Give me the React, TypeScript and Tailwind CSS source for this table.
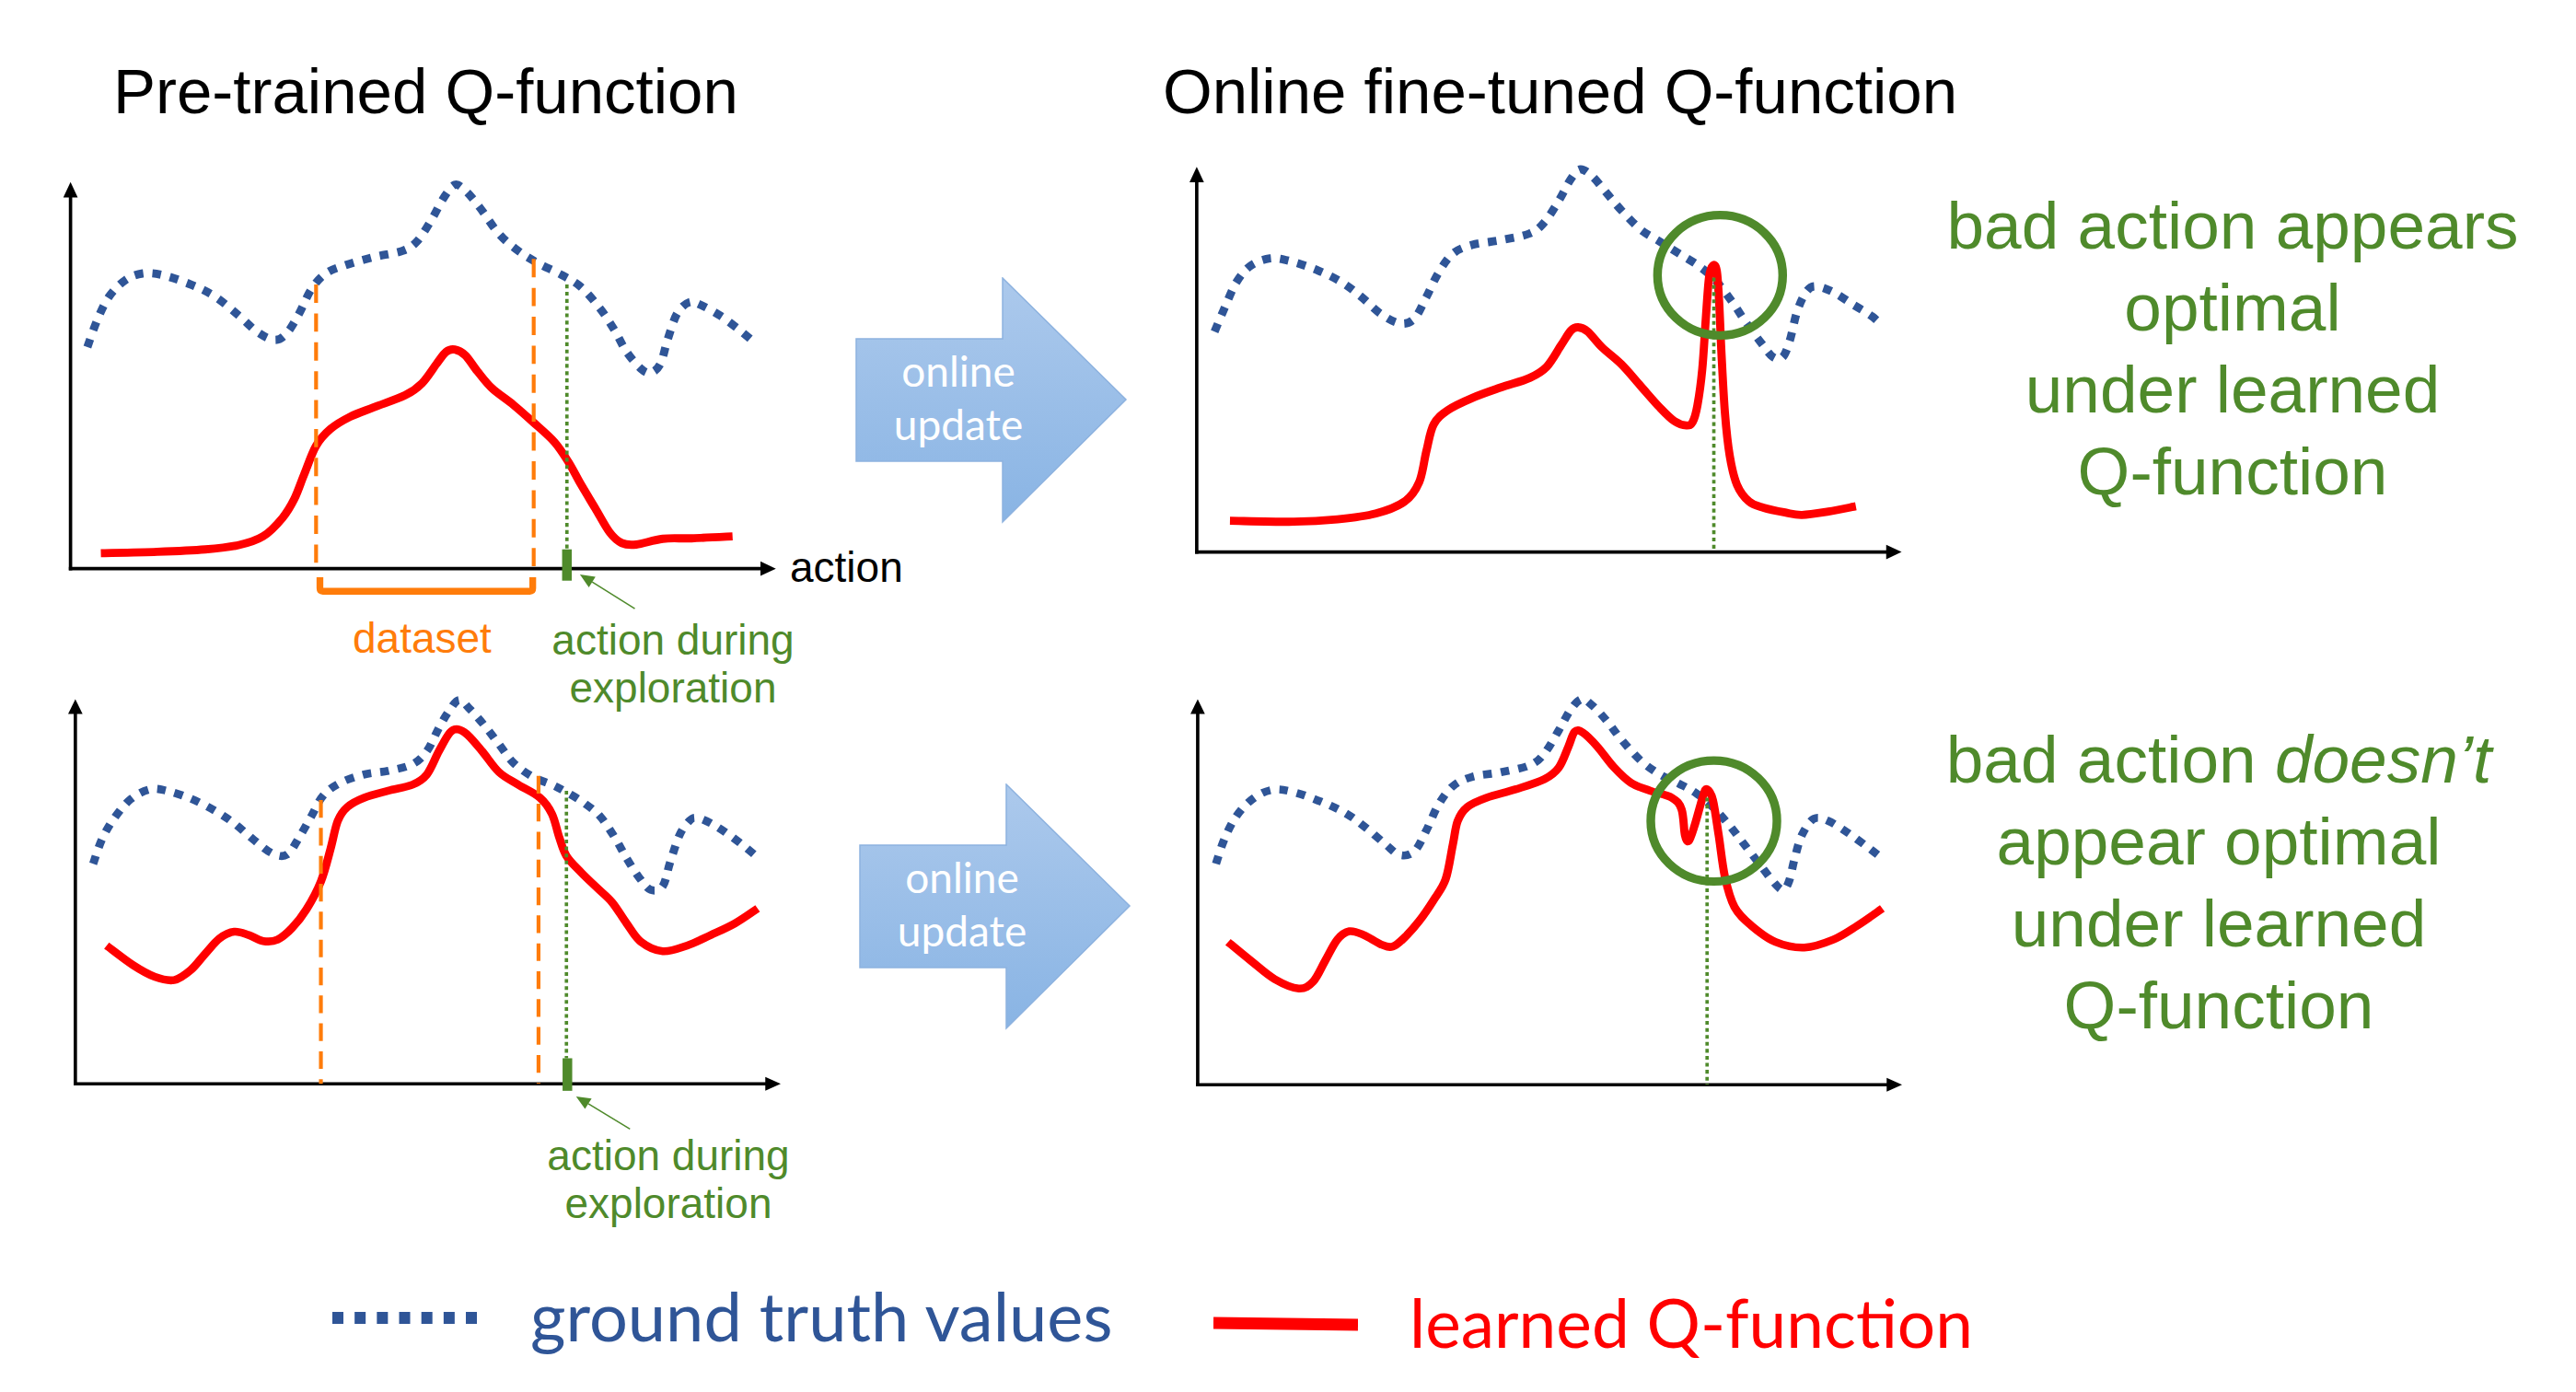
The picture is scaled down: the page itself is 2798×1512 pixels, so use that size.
import React from "react";

type P = [number, number];

function smooth(pts: P[]): string {
  let d = `M${pts[0][0]},${pts[0][1]}`;
  for (let i = 0; i < pts.length - 1; i++) {
    const p0 = pts[i - 1] || pts[i];
    const p1 = pts[i];
    const p2 = pts[i + 1];
    const p3 = pts[i + 2] || p2;
    const c1x = p1[0] + (p2[0] - p0[0]) / 6;
    const c1y = p1[1] + (p2[1] - p0[1]) / 6;
    const c2x = p2[0] - (p3[0] - p1[0]) / 6;
    const c2y = p2[1] - (p3[1] - p1[1]) / 6;
    d += ` C${c1x.toFixed(1)},${c1y.toFixed(1)} ${c2x.toFixed(1)},${c2y.toFixed(1)} ${p2[0]},${p2[1]}`;
  }
  return d;
}

const BLUE = "#2f5597";
const RED = "#ff0000";
const GREEN = "#4f8a2b";
const ORANGE = "#ff7c0a";

type ChartProps = {
  w: number;
  h: number;
  vbH: number;
  axisX: number;
  axisY: number;
  yTip: number;
  xTip: number;
  blue: P[];
  red: P[];
  oranges?: { x: number; y1: number }[];
  green: { x: number; y1: number; y2: number };
  bar?: { x: number; y1: number; y2: number };
  pointer?: { tail: P; tip: P };
  circle?: { cx: number; cy: number; rx: number; ry: number };
  bracket?: boolean;
  className?: string;
};

function Chart(p: ChartProps) {
  let head: string | null = null;
  let base: P | null = null;
  if (p.pointer) {
    const [tx, ty] = p.pointer.tail;
    const [hx, hy] = p.pointer.tip;
    const len = Math.hypot(hx - tx, hy - ty);
    const ux = (hx - tx) / len;
    const uy = (hy - ty) / len;
    const bx = hx - 30 * ux;
    const by = hy - 30 * uy;
    const px = -uy * 13;
    const py = ux * 13;
    base = [bx, by];
    head = `${hx},${hy} ${bx + px},${by + py} ${bx - px},${by - py}`;
  }
  return (
    <svg
      width={p.w}
      height={p.h}
      viewBox={`0 0 1568 ${p.vbH}`}
      preserveAspectRatio="none"
      className={`block overflow-visible ${p.className ?? ""}`}
    >
      {/* axes */}
      <line x1={p.axisX} y1={p.axisY + 3.5} x2={p.axisX} y2={p.yTip + 26} stroke="#000" strokeWidth={7} />
      <polygon points={`${p.axisX},${p.yTip} ${p.axisX - 15},${p.yTip + 32} ${p.axisX + 15},${p.yTip + 32}`} fill="#000" />
      <line x1={p.axisX - 3.5} y1={p.axisY} x2={p.xTip - 26} y2={p.axisY} stroke="#000" strokeWidth={7} />
      <polygon points={`${p.xTip},${p.axisY} ${p.xTip - 32},${p.axisY - 15} ${p.xTip - 32},${p.axisY + 15}`} fill="#000" />

      {/* ground truth */}
      <path d={smooth(p.blue)} fill="none" stroke={BLUE} strokeWidth={17} strokeDasharray="18 19" />

      {/* learned */}
      <path d={smooth(p.red)} fill="none" stroke={RED} strokeWidth={17} strokeLinejoin="round" />

      {/* dataset bounds */}
      {p.oranges?.map((o, i) => (
        <line key={i} x1={o.x} y1={o.y1} x2={o.x} y2={p.axisY} stroke={ORANGE} strokeWidth={8} strokeDasharray="38 22" />
      ))}
      {p.bracket && (
        <path d="M588,893 L588,916 Q588,922 594,922 L1024,922 Q1030,922 1030,916 L1030,893" fill="none" stroke={ORANGE} strokeWidth={14} />
      )}

      {/* exploration action */}
      <line x1={p.green.x} y1={p.green.y1} x2={p.green.x} y2={p.green.y2} stroke={GREEN} strokeWidth={7} strokeDasharray="8 7" />
      {p.bar && <rect x={p.bar.x - 10} y={p.bar.y1} width={20} height={p.bar.y2 - p.bar.y1} fill={GREEN} />}
      {p.pointer && base && head && (
        <>
          <line x1={p.pointer.tail[0]} y1={p.pointer.tail[1]} x2={base[0]} y2={base[1]} stroke={GREEN} strokeWidth={3} />
          <polygon points={head} fill={GREEN} />
        </>
      )}
      {p.circle && (
        <ellipse cx={p.circle.cx} cy={p.circle.cy} rx={p.circle.rx} ry={p.circle.ry} fill="none" stroke={GREEN} strokeWidth={18} />
      )}
    </svg>
  );
}

function UpdateArrow({ id }: { id: string }) {
  return (
    <div className="relative w-[296px] h-[268px]">
      <svg width="296" height="268" viewBox="0 0 296 268" className="absolute left-0 top-0">
        <defs>
          <linearGradient id={id} x1="0" y1="0" x2="0" y2="1">
            <stop offset="0" stopColor="#acc9ec" />
            <stop offset="1" stopColor="#89b4e4" />
          </linearGradient>
        </defs>
        <polygon
          points="1,67 160,67 160,1 294,133 160,266 160,200 1,200"
          fill={`url(#${id})`}
          stroke="#8db2df"
          strokeWidth="1.5"
        />
      </svg>
      <div className="absolute left-0 top-[73px] w-[224px] text-center text-white font-[Lato,sans-serif] text-[46px] leading-[58px]">
        online
        <br />
        update
      </div>
    </div>
  );
}

const TL_BLUE: P[] = [
  [105, 415], [125, 360], [150, 310], [185, 275], [220, 262], [260, 265], [320, 285], [370, 310], [420, 350],
  [460, 385], [495, 400], [520, 385], [545, 345], [570, 295], [600, 262], [640, 245], [700, 228], [760, 215],
  [790, 195], [820, 150], [845, 105], [868, 78], [890, 90], [920, 125], [960, 180], [1000, 215], [1040, 240],
  [1090, 265], [1130, 290], [1170, 335], [1200, 380], [1225, 425], [1255, 460], [1275, 468], [1295, 450],
  [1310, 400], [1330, 345], [1355, 322], [1380, 328], [1420, 350], [1460, 380], [1490, 405],
];
const TL_RED: P[] = [
  [133, 843], [250, 840], [350, 835], [420, 826], [470, 808], [510, 770], [535, 730], [555, 680], [580, 620],
  [610, 585], [650, 560], [700, 540], [765, 515], [800, 490], [830, 450], [850, 425], [868, 420], [890, 432],
  [915, 465], [945, 500], [990, 535], [1030, 570], [1075, 612], [1105, 655], [1130, 700], [1160, 750],
  [1190, 800], [1215, 822], [1245, 825], [1300, 813], [1360, 812], [1445, 808],
];

const TR_BLUE: P[] = [
  [75, 402], [95, 355], [120, 300], [150, 265], [190, 250], [230, 255], [290, 275], [340, 300], [380, 330],
  [420, 365], [460, 385], [490, 375], [515, 330], [540, 280], [570, 240], [610, 222], [670, 212], [730, 198],
  [760, 175], [790, 130], [815, 85], [835, 65], [860, 80], [890, 115], [920, 150], [960, 190], [1000, 215],
  [1040, 240], [1080, 265], [1115, 295], [1150, 340], [1180, 385], [1210, 425], [1235, 455], [1255, 455],
  [1270, 420], [1285, 360], [1305, 318], [1325, 308], [1360, 320], [1400, 345], [1440, 370], [1462, 390],
];
const TR_RED: P[] = [
  [107, 795], [240, 797], [330, 792], [410, 780], [470, 755], [500, 715], [515, 650], [530, 595], [560, 565],
  [610, 540], [670, 518], [730, 498], [765, 475], [795, 430], [815, 400], [830, 393], [850, 402], [880, 435],
  [920, 470], [960, 515], [1000, 560], [1030, 588], [1055, 597], [1068, 590], [1078, 555], [1088, 480],
  [1095, 380], [1102, 290], [1110, 265], [1118, 275], [1123, 340], [1128, 450], [1135, 570], [1145, 660],
  [1160, 720], [1185, 755], [1215, 768], [1260, 778], [1295, 783], [1350, 776], [1407, 765],
];

const BL_BLUE: P[] = [
  [117, 432], [135, 380], [160, 335], [195, 293], [235, 272], [270, 275], [320, 292], [370, 318], [410, 345],
  [450, 380], [490, 410], [520, 412], [545, 375], [570, 330], [595, 285], [630, 258], [680, 240], [730, 232],
  [780, 218], [810, 190], [835, 140], [855, 105], [877, 80], [900, 100], [930, 135], [960, 175], [990, 215],
  [1030, 245], [1070, 262], [1100, 278], [1135, 300], [1170, 330], [1200, 375], [1225, 420], [1250, 460],
  [1275, 488], [1300, 480], [1315, 430], [1335, 370], [1355, 340], [1370, 333], [1400, 345], [1445, 375],
  [1500, 420],
];
const BL_RED: P[] = [
  [145, 608], [200, 650], [245, 675], [285, 682], [320, 660], [350, 625], [380, 592], [410, 578], [440, 585],
  [470, 598], [500, 595], [530, 570], [560, 530], [590, 470], [610, 400], [625, 340], [645, 310], [680, 290],
  [730, 275], [780, 262], [810, 240], [835, 190], [858, 150], [875, 143], [895, 155], [925, 190], [960, 235],
  [1000, 262], [1045, 290], [1070, 325], [1085, 375], [1100, 415], [1130, 450], [1165, 485], [1195, 515],
  [1225, 560], [1255, 600], [1300, 620], [1350, 608], [1400, 585], [1450, 560], [1497, 528],
];

const BR_BLUE: P[] = [
  [78, 432], [95, 380], [120, 330], [155, 292], [195, 273], [240, 278], [300, 300], [350, 325], [390, 355],
  [430, 390], [460, 413], [490, 405], [515, 360], [540, 305], [570, 265], [610, 245], [670, 235], [730, 220],
  [760, 195], [790, 145], [815, 100], [838, 78], [860, 92], [890, 125], [920, 165], [960, 210], [1000, 240],
  [1040, 260], [1075, 280], [1110, 310], [1145, 350], [1175, 390], [1205, 430], [1235, 470], [1255, 488],
  [1268, 470], [1280, 420], [1295, 370], [1320, 335], [1350, 340], [1390, 365], [1430, 395], [1462, 420],
];
const BR_RED: P[] = [
  [103, 600], [150, 640], [200, 680], [250, 700], [280, 685], [305, 640], [330, 595], [355, 577], [385, 585],
  [420, 605], [445, 610], [470, 590], [500, 555], [530, 510], [555, 465], [570, 390], [580, 340], [600, 310],
  [640, 290], [700, 272], [760, 250], [790, 225], [810, 180], [823, 148], [840, 150], [870, 180], [905, 225],
  [940, 258], [980, 275], [1025, 290], [1045, 315], [1052, 370], [1060, 383], [1072, 350], [1090, 285],
  [1098, 272], [1110, 295], [1122, 370], [1135, 460], [1155, 525], [1190, 565], [1240, 600], [1300, 612],
  [1360, 595], [1410, 565], [1462, 528],
];

export default function App() {
  return (
    <div className="w-[2798px] h-[1512px] bg-white overflow-hidden text-black font-['Liberation_Sans',Arial,sans-serif]">
      {/* titles */}
      <div className="flex h-[150px] pt-[65px] pl-[123px] text-[69px] leading-none whitespace-nowrap">
        <div className="w-[1140px]">Pre-trained Q-function</div>
        <div>Online fine-tuned Q-function</div>
      </div>

      {/* row 1 */}
      <div className="flex h-[570px]">
        <div className="w-[860px] pl-[40px]">
          <div className="relative w-[820px]">
            <Chart
              className="mt-[10px]"
              w={820}
              h={500}
              vbH={956}
              axisX={70}
              axisY={875}
              yTip={72}
              xTip={1535}
              blue={TL_BLUE}
              red={TL_RED}
              oranges={[{ x: 580, y1: 285 }, { x: 1032, y1: 232 }]}
              green={{ x: 1101, y1: 285, y2: 835 }}
              bar={{ x: 1101, y1: 835, y2: 900 }}
              pointer={{ tail: [1242, 958], tip: [1128, 887] }}
              bracket
            />
            <span className="absolute left-[818px] top-[433px] text-[46px] leading-none whitespace-nowrap">action</span>
            <span className="absolute left-[343px] top-[510px] text-[46px] leading-none text-[#ff7c0a] whitespace-nowrap">dataset</span>
            <div className="absolute left-[541px] top-[509px] w-[300px] text-center text-[46px] leading-[52px] text-[#4f8a2b] whitespace-nowrap">
              action during
              <br />
              exploration
            </div>
          </div>
        </div>
        <div className="w-[420px] pl-[69px] pt-[151px]">
          <UpdateArrow id="arrowGradTop" />
        </div>
        <div className="w-[820px]">
          <Chart
            w={820}
            h={470}
            vbH={899}
            axisX={38}
            axisY={860}
            yTip={60}
            xTip={1502}
            blue={TR_BLUE}
            red={TR_RED}
            green={{ x: 1112, y1: 290, y2: 860 }}
            circle={{ cx: 1125, cy: 285, rx: 130, ry: 125 }}
          />
        </div>
        <div className="w-[650px] pt-[50px] text-center text-[73px] leading-[89px] text-[#4f8a2b] whitespace-nowrap">
          bad action appears
          <br />
          optimal
          <br />
          under learned
          <br />
          Q-function
        </div>
      </div>

      {/* row 2 */}
      <div className="flex h-[660px]">
        <div className="w-[860px] pl-[40px]">
          <div className="relative w-[820px]">
            <Chart
              w={820}
              h={480}
              vbH={950}
              axisX={80}
              axisY={905}
              yTip={78}
              xTip={1545}
              blue={BL_BLUE}
              red={BL_RED}
              oranges={[{ x: 590, y1: 295 }, { x: 1042, y1: 243 }]}
              green={{ x: 1100, y1: 275, y2: 850 }}
              bar={{ x: 1102, y1: 850, y2: 920 }}
              pointer={{ tail: [1232, 1002], tip: [1120, 932] }}
            />
            <div className="absolute left-[536px] top-[509px] w-[300px] text-center text-[46px] leading-[52px] text-[#4f8a2b] whitespace-nowrap">
              action during
              <br />
              exploration
            </div>
          </div>
        </div>
        <div className="w-[420px] pl-[73px] pt-[131px]">
          <UpdateArrow id="arrowGradBottom" />
        </div>
        <div className="w-[820px]">
          <Chart
            w={820}
            h={480}
            vbH={950}
            axisX={40}
            axisY={907}
            yTip={78}
            xTip={1503}
            blue={BR_BLUE}
            red={BR_RED}
            green={{ x: 1098, y1: 290, y2: 907 }}
            circle={{ cx: 1112, cy: 340, rx: 131, ry: 130 }}
          />
        </div>
        <div className="w-[620px] pt-[60px] text-center text-[73px] leading-[89px] text-[#4f8a2b] whitespace-nowrap">
          bad action <span className="italic">doesn’t</span>
          <br />
          appear optimal
          <br />
          under learned
          <br />
          Q-function
        </div>
      </div>

      {/* legend */}
      <div className="flex items-start h-[132px] font-[Lato,sans-serif] text-[74px] leading-none whitespace-nowrap">
        <svg width="157" height="13" viewBox="0 0 157 13" className="block ml-[361px] mt-[45px]">
          <line x1="0" y1="6.5" x2="157" y2="6.5" stroke={BLUE} strokeWidth="13" strokeDasharray="12 12.17" />
        </svg>
        <div className="w-[742px] ml-[58px] mt-[12px] text-[#2f5597]">ground truth values</div>
        <svg width="157" height="16" viewBox="0 0 157 16" className="block mt-[50px]">
          <line x1="0" y1="7" x2="157" y2="9" stroke={RED} strokeWidth="13" />
        </svg>
        <div className="ml-[56px] mt-[20px] text-[73px] text-[#ff0000]">learned Q-function</div>
      </div>
    </div>
  );
}
